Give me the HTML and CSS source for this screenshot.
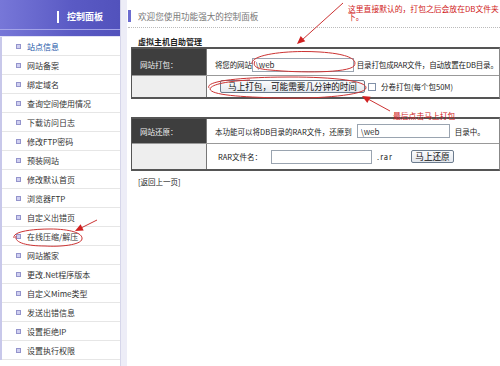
FILE: index.html
```html
<!DOCTYPE html>
<html lang="zh-CN">
<head>
    <meta charset="UTF-8">
    <title>控制面板</title>
    <link rel="stylesheet" href="styles.css">
</head>
<body>
    <div class="page">
        <div class="sidebar">
            <div class="side-head">
                <div class="side-title"><span class="side-mark"></span>控制面板</div>
                <div class="side-band"></div>
            </div>
            <ul class="menu">
                <li class="current"><i></i>站点信息</li>
                <li><i></i>网站备案</li>
                <li><i></i>绑定域名</li>
                <li><i></i>查询空间使用情况</li>
                <li><i></i>下载访问日志</li>
                <li><i></i>修改FTP密码</li>
                <li><i></i>预装网站</li>
                <li><i></i>修改默认首页</li>
                <li><i></i>浏览器FTP</li>
                <li><i></i>自定义出错页</li>
                <li><i></i>在线压缩/解压</li>
                <li><i></i>网站搬家</li>
                <li><i></i>更改.Net程序版本</li>
                <li><i></i>自定义Mime类型</li>
                <li><i></i>发送出错信息</li>
                <li><i></i>设置拒绝IP</li>
                <li><i></i>设置执行权限</li>
            </ul>
        </div>
        <div class="gutter"></div>
        <div class="main">
            <div class="welcome"><span class="welcome-mark"></span>欢迎您使用功能强大的控制面板</div>
            <div class="rule"></div>
            <div class="subtitle">虚拟主机自助管理</div>

            <div class="panel">
                <div class="row row-pack">
                    <div class="label">网站打包：</div>
                    <div class="cell cell-long">将您的网站<input class="field field-pack" type="text" value="\web">目录打包成RAR文件，自动放置在DB目录。</div>
                </div>
                <div class="row row-pack-go">
                    <div class="label label-blank"></div>
                    <div class="cell cell-go"><button class="btn btn-pack">马上打包，可能需要几分钟的时间</button><span class="check"></span>分卷打包(每个包50M)</div>
                </div>
            </div>

            <div class="panel panel-restore">
                <div class="row row-restore">
                    <div class="label">网站还原：</div>
                    <div class="cell">本功能可以将DB目录的RAR文件，还原到<input class="field field-dir" type="text" value="\web">目录中。</div>
                </div>
                <div class="row row-restore-go">
                    <div class="label label-blank"></div>
                    <div class="cell cell-file">RAR文件名：<input class="field field-file" type="text"><span class="ext">.rar</span><button class="btn btn-restore">马上还原</button></div>
                </div>
            </div>

            <div class="back">[返回上一页]</div>
        </div>
    </div>

    <svg class="marks" width="500" height="366" viewBox="0 0 500 366">
        <g fill="none" stroke="#cc3333" stroke-width="1">
            <path d="M252 64 C250 54 290 50 320 52 C350 54 358 60 354 66 C348 73 300 73 270 70 C258 69 252 67 255 61"/>
            <path d="M209 88 C204 80 250 77 290 77 C335 77 367 81 366 88 C365 95 320 99 280 98 C240 97 211 95 210 89 C211 84 230 81 250 80"/>
            <path d="M14 238 C12 231 35 229 50 229 C70 229 83 233 82 239 C81 245 60 247 45 246 C28 246 14 243 16 236"/>
            <line x1="343" y1="3" x2="302" y2="40"/>
            <line x1="390" y1="111" x2="368" y2="99"/>
            <line x1="97" y1="220" x2="81" y2="228"/>
        </g>
        <g fill="#d02020">
            <polygon points="297,44 305.3,41.3 300.7,36.1"/>
            <polygon points="362,96 370.7,96.7 367.3,102.9"/>
            <polygon points="75,231 83.7,230.5 80.6,224.3"/>
        </g>
    </svg>
    <div class="note note-top">这里直接默认的，打包之后会放在DB文件夹下。</div>
    <div class="note note-last">最后点击马上打包</div>
</body>
</html>
```

FILE: styles.css
```css
body {
    margin: 0;
    padding: 0;
    background-color: #fff;
    font-family: "Noto Sans CJK SC", "Noto Sans", sans-serif;
    font-size: 7.5px;
    color: #222;
    overflow: hidden;
}

.page {
    display: flex;
    height: 366px;
}

/* 左侧菜单 */
.sidebar {
    width: 121px;
    flex-shrink: 0;
    border-right: 1px solid #d6d6ea;
    box-sizing: border-box;
}

.side-head {
    background: linear-gradient(to right, #7777d8, #5a5ac4 60%, #5252bc);
}

.side-title {
    height: 29px;
    display: flex;
    align-items: center;
    padding-left: 57px;
    padding-top: 4px;
    box-sizing: border-box;
    color: #fff;
    font-weight: bold;
    font-size: 9px;
}

.side-mark {
    width: 2px;
    height: 12px;
    background-color: #fff;
    margin-right: 8px;
}

.side-band {
    height: 6px;
    border-top: 1px solid #a4a4e8;
    border-bottom: 1px solid #e2e2f4;
}

.menu {
    list-style: none;
    margin: 0;
    padding: 0;
    border-left: 2px solid #c8c8ea;
}

.menu li {
    height: 18px;
    border-bottom: 1px solid #e6e6e6;
    display: flex;
    align-items: center;
    font-size: 8px;
    color: #333;
}

.menu li.current {
    color: #2456a8;
}

.menu i {
    width: 3px;
    height: 3px;
    border: 1px solid #9494cc;
    background-color: #cfcff0;
    margin-left: 14px;
    margin-right: 6px;
}

.gutter {
    width: 6px;
    flex-shrink: 0;
    background-color: #ededf7;
}

/* 右侧内容 */
.main {
    flex: 1;
    min-width: 0;
    padding-top: 10px;
}

.welcome {
    height: 12px;
    display: flex;
    align-items: center;
    margin-left: 1px;
    font-size: 8.6px;
    color: #777;
}

.welcome-mark {
    width: 3px;
    height: 12px;
    background-color: #6c6cd0;
    margin-right: 7px;
}

.rule {
    margin-top: 5px;
    margin-left: 1px;
    border-top: 1px dotted #bbb;
}

.subtitle {
    margin-top: 9px;
    padding-left: 11px;
    height: 10px;
    line-height: 10px;
    font-weight: bold;
    font-size: 8px;
    color: #222;
}

.panel {
    margin-left: 4px;
    border-top: 2px solid #555;
    border-bottom: 2px solid #555;
    border-left: 1px solid #555;
    border-right: 1px solid #888;
}

.panel-restore {
    margin-top: 18px;
}

.row {
    display: grid;
    grid-template-columns: 75px minmax(0, 1fr);
}

.row + .row {
    border-top: 1px solid #999;
}

.row-pack { height: 26px; }
.row-pack-go { height: 21px; }
.row-restore { height: 24px; }
.row-restore-go { height: 25px; }

.label {
    background-color: #3e3e3e;
    color: #eee;
    border-right: 1px solid #777;
    display: flex;
    align-items: center;
    padding-left: 8px;
}

.row-pack .label,
.row-pack .cell {
    padding-top: 5px;
    box-sizing: border-box;
}

.label-blank {
    background-color: #eee;
}

.cell {
    display: flex;
    align-items: center;
    padding-left: 8px;
    white-space: nowrap;
}

.cell-long {
    letter-spacing: -0.15px;
}

.field {
    height: 14px;
    box-sizing: border-box;
    border: 1px solid #9aa4b0;
    padding: 0 0 0 3px;
    font-family: inherit;
    font-size: 8px;
    color: #333;
    background-color: #fff;
    margin: 0 3px 0 0;
}

.field-pack { width: 102px; }
.field-dir { width: 93px; margin-left: 5px; margin-right: 5px; }
.field-file { width: 101px; margin-left: 9px; margin-right: 5px; }

.cell-go {
    padding-left: 13px;
}

.cell-file {
    padding-left: 11px;
}

.btn {
    height: 13px;
    padding: 0 2px;
    border: 1px solid #6c7c8e;
    border-radius: 2px;
    background: linear-gradient(#fbfcfd, #e4e8ee);
    font-family: inherit;
    font-size: 8.6px;
    line-height: 11px;
    color: #111;
    cursor: pointer;
}

.btn-pack {
    width: 145px;
}

.btn-restore {
    width: 43px;
    margin-left: 18px;
}

.check {
    width: 6px;
    height: 6px;
    border: 1px solid #8090a8;
    background-color: #fff;
    margin-left: 3px;
    margin-right: 5px;
}

.ext {
    letter-spacing: 1px;
}

.back {
    margin-top: 6px;
    padding-left: 11px;
    line-height: 10px;
    font-size: 7.5px;
}

/* 红色标注 */
.marks {
    position: absolute;
    left: 0;
    top: 0;
    pointer-events: none;
}

.note {
    position: absolute;
    color: #d02020;
    font-size: 7.8px;
    line-height: 8px;
}

.note-top {
    left: 348px;
    top: 5px;
    width: 152px;
}

.note-last {
    left: 393px;
    top: 112px;
}
```
